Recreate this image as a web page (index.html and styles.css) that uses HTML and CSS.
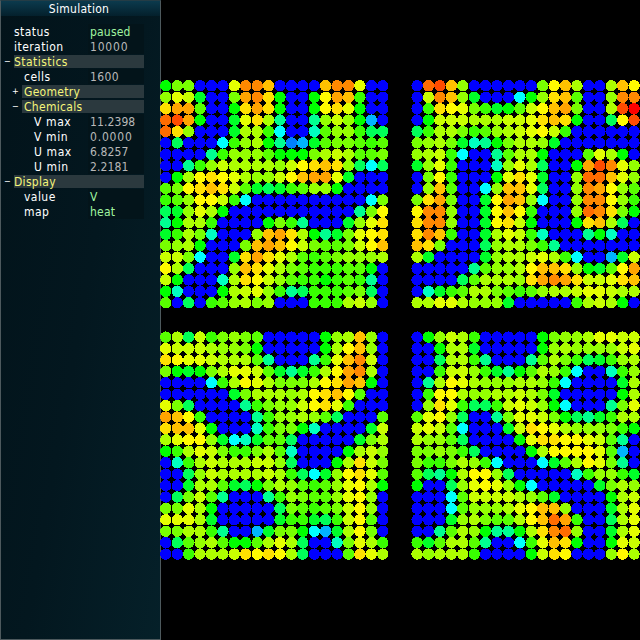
FILE: index.html
```
<!DOCTYPE html>
<html lang="en">
<head>
<meta charset="utf-8">
<title>Simulation</title>
<link rel="stylesheet" href="styles.css">
</head>
<body>
<main class="app">
  <aside class="panel">
    <h1 class="title">Simulation</h1>
    <div class="rows">
      <div class="row"><span class="label">status</span><span class="value text">paused</span></div>
      <div class="row"><span class="label">iteration</span><span class="value wide">10000</span></div>
      <div class="row group"><span class="toggle">−</span><span class="label">Statistics</span></div>
      <div class="row sub"><span class="label">cells</span><span class="value mid">1600</span></div>
      <div class="row sub group"><span class="toggle">+</span><span class="label geo">Geometry</span></div>
      <div class="row sub group"><span class="toggle">−</span><span class="label geo">Chemicals</span></div>
      <div class="row deep"><span class="label">V max</span><span class="value">11.2398</span></div>
      <div class="row deep"><span class="label">V min</span><span class="value wide">0.0000</span></div>
      <div class="row deep"><span class="label">U max</span><span class="value">6.8257</span></div>
      <div class="row deep"><span class="label">U min</span><span class="value">2.2181</span></div>
      <div class="row group"><span class="toggle">−</span><span class="label geo">Display</span></div>
      <div class="row sub"><span class="label">value</span><span class="value text">V</span></div>
      <div class="row sub"><span class="label">map</span><span class="value text">heat</span></div>
    </div>
  </aside>
  <svg class="field" width="480" height="640" viewBox="160 0 480 640"></svg>
</main>
<script src="field.js"></script>
</body>
</html>
```
FILE: styles.css
```
* { box-sizing: border-box; }
body {
  margin: 0;
  background: #000;
  overflow: hidden;
  font-family: "DejaVu Sans Condensed", "DejaVu Sans", sans-serif;
  font-stretch: condensed;
  font-size: 12px;
}
.app { display: flex; width: 640px; height: 640px; }
.panel {
  width: 161px;
  height: 640px;
  flex: none;
  border: 1px solid #4d595d;
  border-top-color: #243c45;
  background: linear-gradient(100deg, #02131a 0%, #03171f 50%, #052029 100%);
}
.title {
  margin: 0;
  height: 15px;
  line-height: 16px;
  padding-right: 3px;
  font-size: 12px;
  font-weight: normal;
  text-align: center;
  color: #fff;
  letter-spacing: 0.3px;
  background: linear-gradient(#0b3a4d, #04202c);
}
.rows { padding: 8px 16px 0 13px; }
.row { display: flex; height: 15px; line-height: 17px; position: relative; }
.label { width: 74px; color: #fff; white-space: pre; letter-spacing: 0.45px; }
.value { flex: 1; height: 15px; padding-left: 2px; color: #b8b8b8; background: #03141a; letter-spacing: 0.1px; }
.value.text { color: #a0f5a0; letter-spacing: 0.2px; }
.value.wide { letter-spacing: 0.8px; }
.value.mid { letter-spacing: 0.35px; }
.sub { padding-left: 8px; }
.sub .label { width: 66px; padding-left: 2px; }
.deep { padding-left: 18px; }
.deep .label { width: 56px; padding-left: 2px; letter-spacing: 0.6px; }
.group .label { flex: 1; height: 13px; line-height: 15px; margin-top: 1px; background: #2b393e; color: #f5f57a; }
.group .geo { letter-spacing: 0.3px; }
.toggle { position: absolute; left: -10px; top: -1px; width: 8px; color: #fff; font-size: 9px; }
.sub .toggle { left: -2px; }
.field { display: block; width: 480px; height: 640px; margin-left: -1px; flex: none; }
```
FILE: field.js
```
const HEAT = {
  B: '#0000ff', b: '#0080ff', k: '#00b4ff', c: '#00ffff', t: '#00ffc0', s: '#00ff90',
  g: '#00ff58', h: '#00ff28', G: '#00ff00', i: '#38ff00', j: '#58ff00', l: '#78ff00',
  m: '#94ff00', n: '#acff00', o: '#c8ff00', p: '#e4ff00', y: '#fffa00', z: '#ffe000',
  a: '#ffc000', q: '#ffa400', r: '#ff8800', u: '#ff6c00', v: '#ff4c00', w: '#ff0000'
};
const PITCH = 11.42;
const BLOCKS = [
  { x: 165.8, y: 85.8, rows: `
GllBBBprraBBBBarrpBB
mpohBBlqrzGBBGyqaiBB
zqqjBBGzqzGBBGyzpGBB
uvqGBBhpznsBBsmomGkB
uzmBBBhnnicBBtjmmigg
BgBBBcimnGsbkhjlljij
BBBBsimmmjGGGlnonjjl
BBsimonnnnmoyzazmgcg
BGnyzypnmmoyaqqphBBB
jlyzazojhghijmmGBBBB
ijmyyoicBBBBBBBBBBcl
ghmpnGBBBBBBBBBBBsly
sGnniBBBBGlisBBBhmpz
hinltBBBmaqznGshlpyz
lmnGBBBlaqayoljjloya
oolcBBhzqzpnjijlmmmn
yngBBBmazpnljiiijjGB
oGBBBtnzyomjiiGijisB
GtBBBGnopmisgiiijlgB
jBgBijmnlmBBBiiinomB` },
  { x: 417.1, y: 85.8, rows: `
BuvamBBBBBBlyanBBnay
BoramhBBBcGmzajBBmrr
BizyplihGjoyaqlBBnvw
BGooonnnoopzazGBBgyv
ginnlijmnopyoiBBBBBB
lmnlhtsGlnnmhBBBBBBB
mnoicBBsjnnGBBBjpnGB
hmpiBBBtmpngBBGqvrpm
BlyiBBBGpzphBBmuuapm
BmajBBcmaapgBBmrqymj
lzqlBBhyqamcBBmrrymi
yrrmBBhyayiBBBmurzlG
zrrmBBhyzoGBBBGzangB
zraiBBhnpoitBBBsGtBB
azlBBBgmnnlisBBBBBBB
nhBBBBhmnnopnicBBkho
BBBBBsjmmnyaazmGhjyq
BBBBgjnnnmzqrqzoopza
Bthijnnljijmnnopponn
nnppnmmmhBBBBBinonGB` },
  { x: 165.8, y: 337.1, rows: `
jngoilmljBBBBBGmnamB
pooonmmlGBBBBBGnyamB
zypponnnjsBBBsiparoB
lGhGlnppojhshinyqrnB
BBBBcinypnlllnyzqaGB
BBBBBBhlnnnmnyzayjBB
plgBBBBsilmmoyzpiBBB
qayiBBBBsimmnmjgBBBj
zaapGBBBtillGtBBBBho
npyymhcthjjgBBBBBhln
GinpoliilnjtBBBBGnom
BtinonnnoomgBBBGnzol
BBgmonnnnonigchmyzpj
BBhnnjhgGlnmjijmpynG
BglojsBBBsimljjmpymB
llpnGBBBBBgljijloymB
pppnhBBBBBhiihgioyjB
llnnisBBkhllGckhnylB
BgjmnjGGjnpngBBtlpni
BBinnnozyzyngBBBjzpn` },
  { x: 417.1, y: 337.1, rows: `
BGmoniBBBBBGlmmnppoo
BBGnnhBBBBBGmnmmmmop
BBgnnisBBBsjnlighimn
BBioomihsGjnmicBBtim
BsnypnmmmnnmicBBBBhn
BiyynmmnnonlhBBBBBGn
BmzpiggiopomGcBBBslp
jpymgBBslppolGgshinn
opojcBBBhozypnmmmliG
nmmjgBBBBGpzzyypojsB
llmligBBBBGnyyyypjkB
liilnmicBBBchjnyplsB
jgsGnyymgBBBBBtimmih
GBBgmpypmGcBBBBBhlnm
BBBcjoooonmjhBBBBGno
BBBcjmmmnpyaamBBBhnp
BBBhmnljjnyauqiBBgnp
BBsjnmGssGnzrumBBhnp
ihjnnjsBBcipazGBBGpo
nmnnniBBBBGozyBBBmyn` }
];

const svg = document.querySelector('.field');
for (const block of BLOCKS) {
  block.rows.trim().split('\n').forEach((row, r) => {
    [...row].forEach((key, c) => {
      const cell = document.createElementNS('http://www.w3.org/2000/svg', 'circle');
      cell.setAttribute('cx', (block.x + c * PITCH).toFixed(2));
      cell.setAttribute('cy', (block.y + r * PITCH).toFixed(2));
      cell.setAttribute('r', 5.7);
      cell.setAttribute('fill', HEAT[key]);
      cell.setAttribute('shape-rendering', 'crispEdges');
      svg.appendChild(cell);
    });
  });
}
```
